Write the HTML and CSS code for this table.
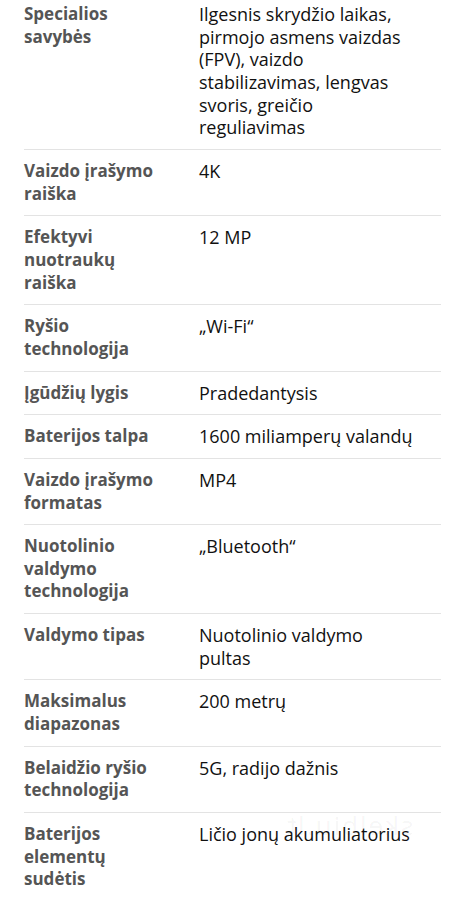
FILE: index.html
```html
<!DOCTYPE html>
<html lang="lt">
<head>
  <meta charset="UTF-8">
  <title>Specifikacijos</title>
  <link rel="stylesheet" href="styles.css">
</head>
<body>
  <div class="specs">
    <div class="row">
      <div class="label">Specialios savybės</div>
      <div class="value">Ilgesnis skrydžio laikas, pirmojo asmens vaizdas (FPV), vaizdo stabilizavimas, lengvas svoris, greičio reguliavimas</div>
    </div>
    <div class="row">
      <div class="label">Vaizdo įrašymo raiška</div>
      <div class="value">4K</div>
    </div>
    <div class="row">
      <div class="label">Efektyvi nuotraukų raiška</div>
      <div class="value">12 MP</div>
    </div>
    <div class="row">
      <div class="label">Ryšio technologija</div>
      <div class="value">„Wi-Fi“</div>
    </div>
    <div class="row">
      <div class="label">Įgūdžių lygis</div>
      <div class="value">Pradedantysis</div>
    </div>
    <div class="row">
      <div class="label">Baterijos talpa</div>
      <div class="value">1600 miliamperų valandų</div>
    </div>
    <div class="row">
      <div class="label">Vaizdo įrašymo formatas</div>
      <div class="value">MP4</div>
    </div>
    <div class="row">
      <div class="label">Nuotolinio valdymo technologija</div>
      <div class="value">„Bluetooth“</div>
    </div>
    <div class="row">
      <div class="label">Valdymo tipas</div>
      <div class="value">Nuotolinio valdymo pultas</div>
    </div>
    <div class="row">
      <div class="label">Maksimalus diapazonas</div>
      <div class="value">200 metrų</div>
    </div>
    <div class="row">
      <div class="label">Belaidžio ryšio technologija</div>
      <div class="value">5G, radijo dažnis</div>
    </div>
    <div class="row last">
      <div class="label">Baterijos elementų sudėtis</div>
      <div class="value">Ličio jonų akumuliatorius</div>
    </div>
  </div>
  <div class="watermark">skelbiu.lt</div>
</body>
</html>
```

FILE: styles.css
```css
body {
  margin: 0;
  background: #fff;
  font-family: "Open Sans", "Noto Sans", sans-serif;
  line-height: 22.65px;
  position: relative;
  height: 900px;
  overflow: hidden;
}
.specs {
  margin: -7px 18px 0 24px;
}
.row {
  display: flex;
  gap: 30px;
  padding: 10px 0;
  border-bottom: 1px solid #e3e3e3;
}
.row.last {
  border-bottom: none;
}
.label {
  flex: 0 0 145px;
  font-size: 17px;
  font-weight: 700;
  color: #555;
}
.value {
  width: 215px;
  font-size: 18px;
  color: #111;
}
.watermark {
  position: absolute;
  left: 285px;
  top: 814px;
  font-size: 26px;
  color: rgba(0, 0, 0, 0.05);
  transform: scaleX(-1);
  letter-spacing: 2px;
}
```
